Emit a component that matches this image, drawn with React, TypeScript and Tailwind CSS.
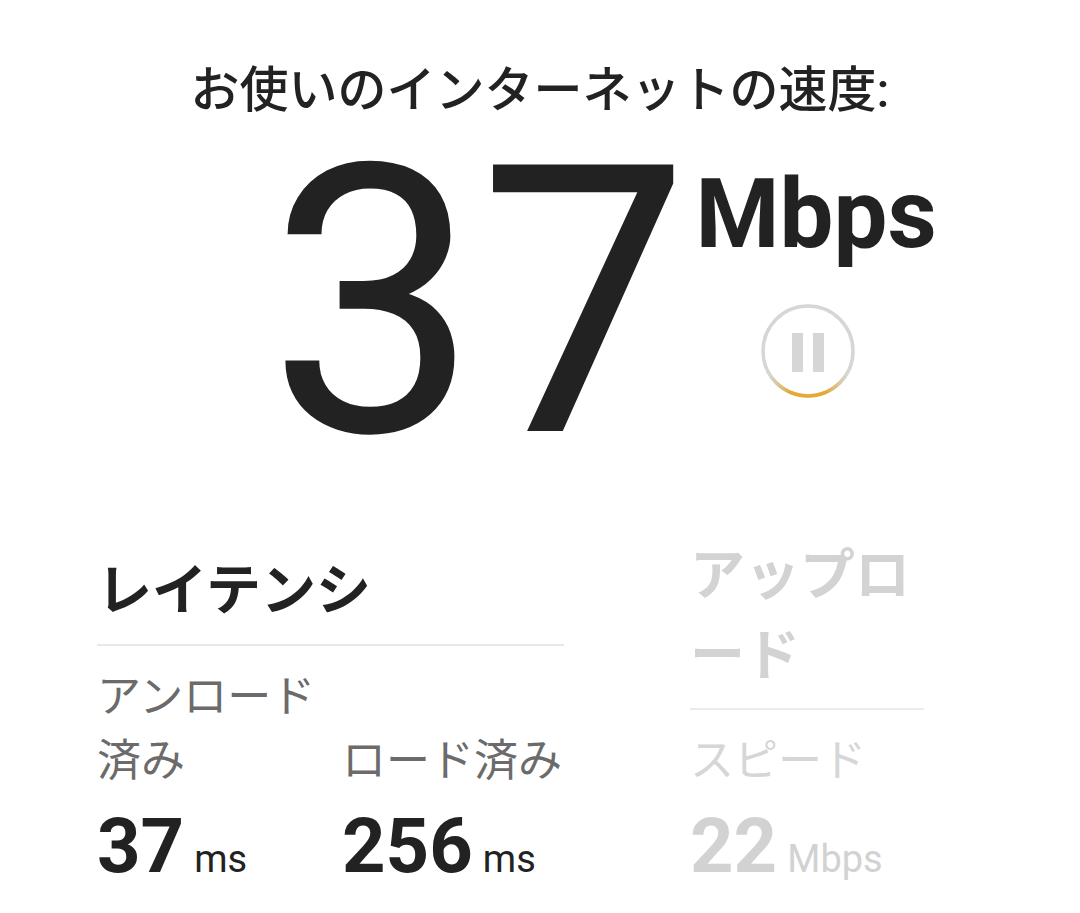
function PauseRing({ className = '' }: { className?: string }) {
  return (
    <svg className={className} width="94" height="94" viewBox="0 0 94 94">
      <defs>
        <linearGradient id="ringGlow" x1="0" y1="0" x2="1" y2="0">
          <stop offset="0%" stopColor="#e9a41c" stopOpacity="0" />
          <stop offset="28%" stopColor="#e9a41c" stopOpacity="0.9" />
          <stop offset="72%" stopColor="#e9a41c" stopOpacity="0.9" />
          <stop offset="100%" stopColor="#e9a41c" stopOpacity="0" />
        </linearGradient>
      </defs>
      <circle cx="47" cy="47" r="45" fill="white" stroke="#d6d6d6" strokeWidth="3.5" />
      <path d="M 8.03 69.5 A 45 45 0 0 0 85.97 69.5" fill="none" stroke="url(#ringGlow)" strokeWidth="3.5" />
      <rect x="31" y="29" width="11" height="39" fill="#d6d6d6" />
      <rect x="52" y="29" width="11" height="39" fill="#d6d6d6" />
    </svg>
  );
}

interface StatProps {
  label: string;
  value: string;
  unit: string;
  muted?: boolean;
}

function Stat({ label, value, unit, muted = false }: StatProps) {
  return (
    <>
      <div className={`text-[44px] leading-[64px] ${muted ? 'text-[#d6d6d6]' : 'text-[#6b6b6b]'}`}>{label}</div>
      <div className={`mt-[13px] flex items-baseline leading-[80px] ${muted ? 'text-[#d2d2d2]' : 'text-[#222]'}`}>
        <span className="text-[76px] font-bold">{value}</span>
        <span className="ml-[10px] text-[38px]">{unit}</span>
      </div>
    </>
  );
}

export default function App() {
  return (
    <div className="h-[913px] w-[1080px] overflow-hidden bg-white font-['Roboto','Noto_Sans_CJK_JP',sans-serif] text-[#222]">
      <h1 className="pt-[63px] text-center text-[49px] font-medium leading-[56px]">
        お使いのインターネットの速度:
      </h1>

      <div className="mt-[44px] flex items-start pl-[268px]">
        <span className="text-[375px] leading-[280px]">37</span>
        <div className="ml-[6px] mt-[3px] flex flex-col">
          <span className="text-[96px] font-bold leading-none">Mbps</span>
          <PauseRing className="ml-[65px] mt-[42px]" />
        </div>
      </div>

      <div className="mt-[92px] flex items-end pl-[97px]">
        <div className="flex w-[467px] flex-col">
          <h2 className="text-[55px] font-semibold leading-[80px]">レイテンシ</h2>
          <div className="mt-[14px] h-[2px] bg-[#e8e8e8]" />
          <div className="mt-[19px] grid grid-cols-[245px_1fr] items-end">
            <div className="flex flex-col">
              <Stat label="アンロード済み" value="37" unit="ms" />
            </div>
            <div className="flex flex-col">
              <Stat label="ロード済み" value="256" unit="ms" />
            </div>
          </div>
        </div>

        <div className="ml-[126px] flex w-[234px] flex-col">
          <h2 className="text-[55px] font-semibold leading-[80px] text-[#d3d3d3]">アップロード</h2>
          <div className="mt-[13px] h-[2px] bg-[#ebebeb]" />
          <div className="mt-[19px] flex flex-col">
            <Stat label="スピード" value="22" unit="Mbps" muted />
          </div>
        </div>
      </div>
    </div>
  );
}
